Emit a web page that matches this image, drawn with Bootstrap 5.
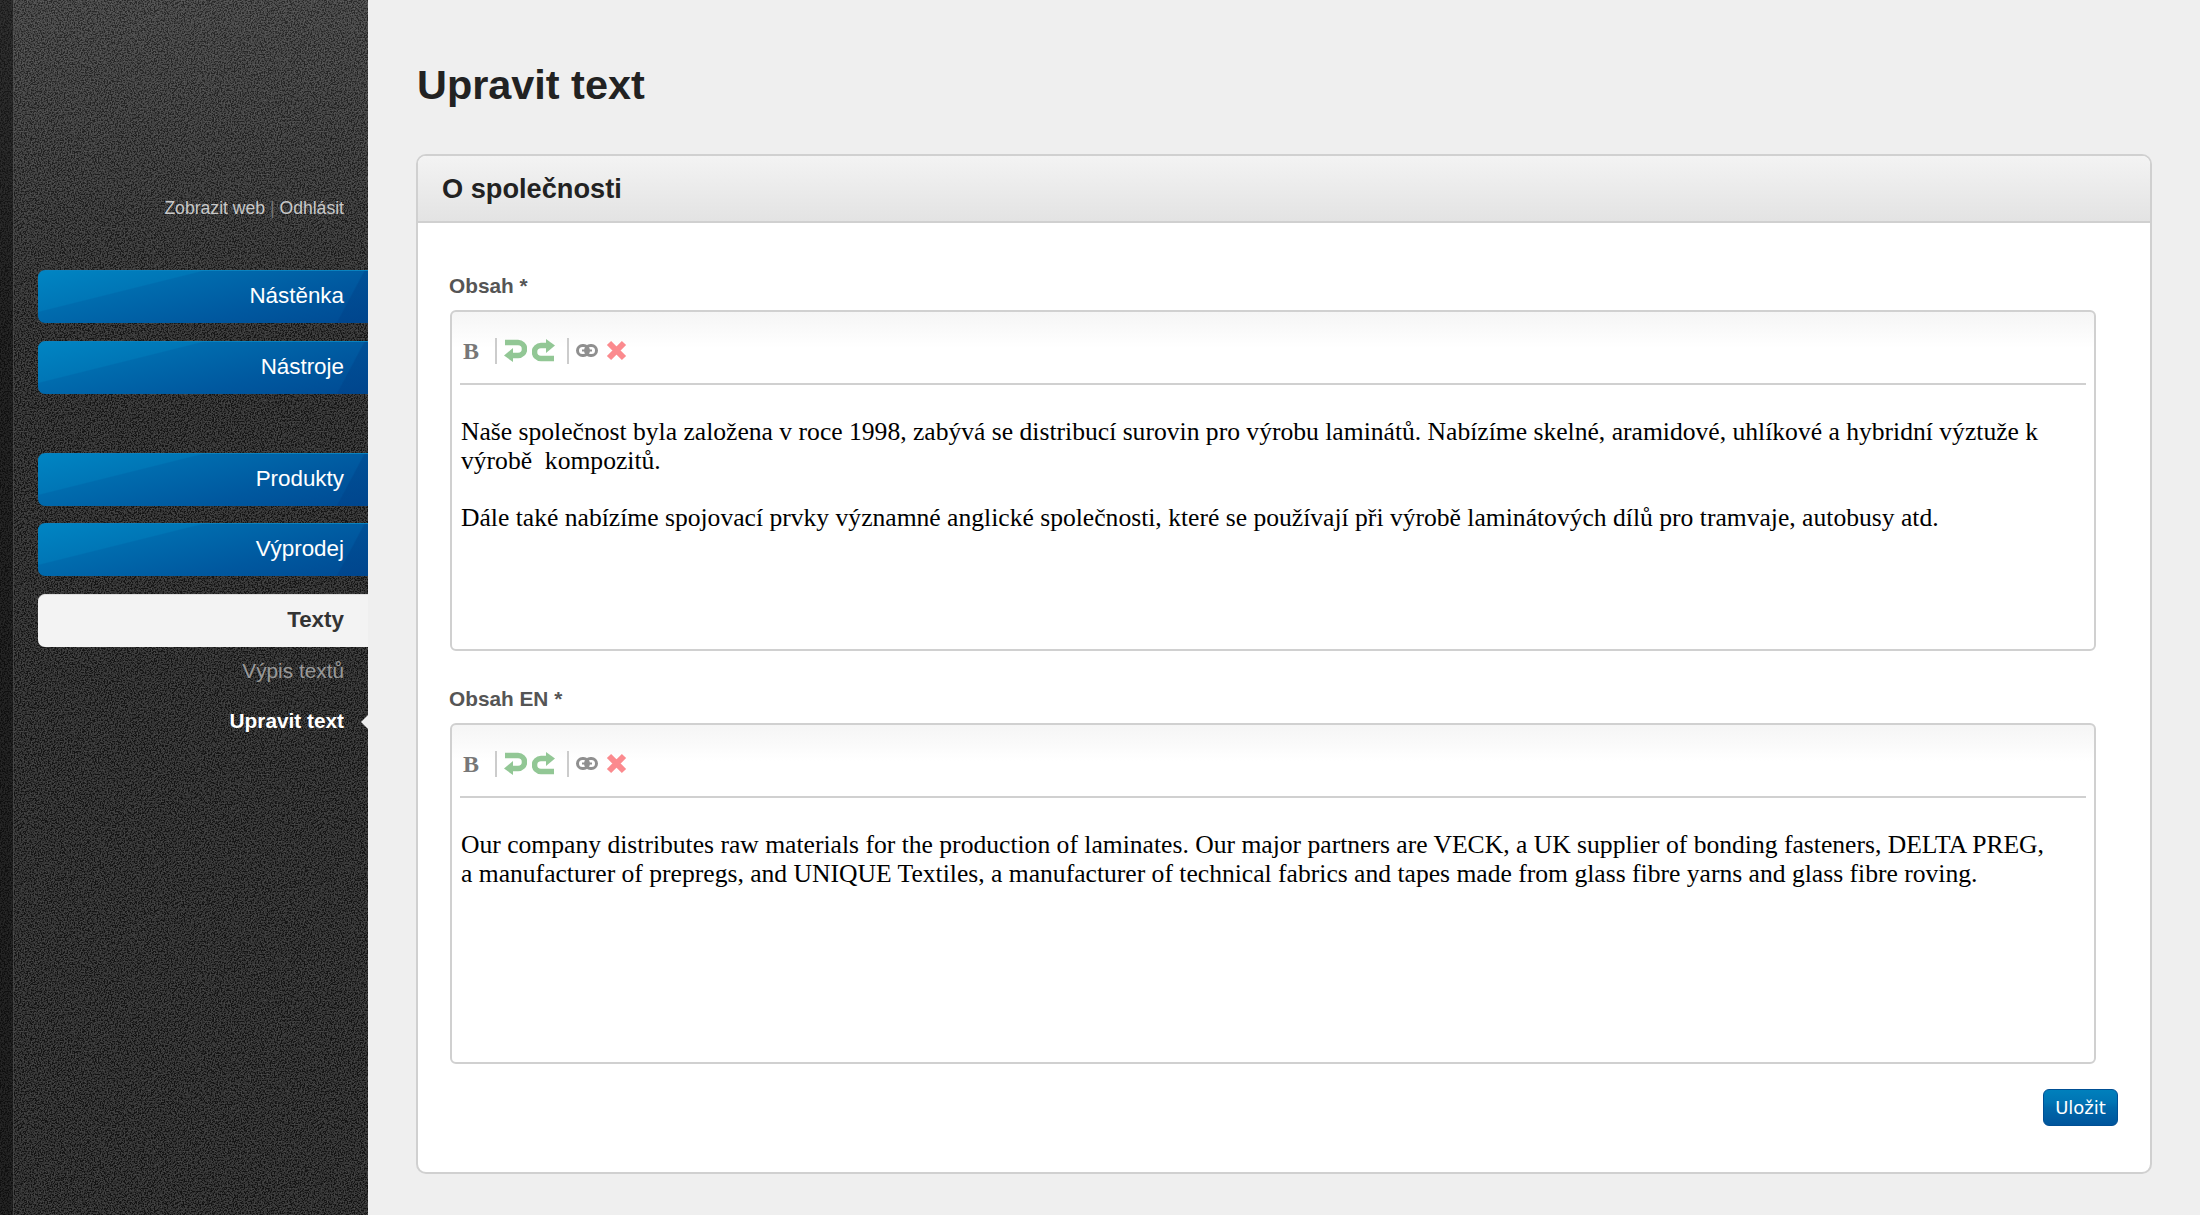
<!DOCTYPE html>
<html lang="cs">
<head>
<meta charset="utf-8">
<title>Upravit text</title>
<link href="https://cdn.jsdelivr.net/npm/bootstrap@5.3.0/dist/css/bootstrap.min.css" rel="stylesheet">
<style>
html,body{height:100%;}
body{background:#efefef;font-family:"Liberation Sans",Arial,sans-serif;color:#222;overflow:hidden;}
.shell{min-height:1215px;}
.side{width:368px;flex:none;position:relative;padding-left:38px;padding-top:198px;
  background-color:#1c1c1c;
  background-image:url("data:image/svg+xml,%3Csvg xmlns='http://www.w3.org/2000/svg' width='300' height='300'%3E%3Cfilter id='n'%3E%3CfeTurbulence type='fractalNoise' baseFrequency='.7' numOctaves='2' stitchTiles='stitch'/%3E%3CfeColorMatrix values='1 0 0 0 -.4 1 0 0 0 -.4 1 0 0 0 -.4 0 0 0 0 .32'/%3E%3C/filter%3E%3Crect width='300' height='300' filter='url(%23n)'/%3E%3C/svg%3E"),linear-gradient(180deg,#3e3e3e 0,#2e2e2e 170px,#1f1f1f 340px,#1c1c1c 100%);}
.side::before{content:"";position:absolute;left:0;top:0;bottom:0;width:14px;background:#0c0c0c;opacity:.5;border-right:1px solid #555;}
.top-links{font-size:17.6px;line-height:20px;text-align:right;padding-right:24px;margin-bottom:52px;}
.top-links a{color:#c9c9c9;text-decoration:none;}
.top-links i{font-style:normal;color:#777;}
.side-nav{gap:17.5px;}
.side-nav .nav-link{height:53px;padding:0 24px 0 0;line-height:50px;text-align:right;font-size:22.4px;color:#fff;border-radius:7px 0 0 7px;border-top:1px solid #0a82bf;
  background:linear-gradient(118deg,rgba(0,60,130,0) 91%,rgba(0,60,130,.35) 91.5%),linear-gradient(166deg,#0085c3 0,#0076b6 30%,#006cae 31%,#00589f 68%,#004a93 100%);}
.side-nav .gap-big{margin-top:41.5px;}
.side-nav .nav-link.on{background:#f3f3f3;color:#333;font-weight:700;border-top-color:#ddd;}
.sub-nav a{display:block;text-align:right;padding-right:24px;font-size:20.8px;line-height:24px;color:#999;text-decoration:none;margin-bottom:26px;position:relative;}
.sub-nav a:first-child{margin-top:12px;}
.sub-nav a.cur{color:#fff;font-weight:700;}
.sub-nav a.cur::after{content:"";position:absolute;right:0;top:6px;border:7px solid transparent;border-right-color:#efefef;border-left-width:0;}
.main{min-width:0;padding:58px 48px 0 48px;}
.page-title{font-size:41.4px;font-weight:700;line-height:54px;margin:0 0 42px 1px;color:#222;}
.panel{border:2px solid #d0d0d0;border-radius:10px;background:#fff;height:1020px;--bs-card-spacer-y:0;}
.panel .card-header{height:67px;padding:0 24px;background:linear-gradient(#f3f3f3,#e3e3e3);border-bottom:2px solid #d0d0d0;border-radius:8px 8px 0 0;font-size:27.2px;font-weight:700;line-height:66px;color:#222;}
.panel .card-body{padding:51px 32px 0 32px;}
.fld-label{display:block;font-size:20.8px;font-weight:700;line-height:24px;color:#555;margin-bottom:12px;margin-left:-1px;}
.editor{border:2px solid #d0d0d0;border-radius:6px;height:341px;margin-bottom:36px;margin-right:22px;padding:0 8px;background:linear-gradient(#f5f5f5 0,#fff 36px);}
.bar{height:73px;border-bottom:2px solid #d0d0d0;padding:6px 0 0 3px;margin:0;}
.bar .bold{font:700 24px/1 "Liberation Serif",serif;color:#777;width:32px;}
.bar .sep{width:2px;height:26px;background:#ccc;margin:0 7px 0 0;}
.bar svg{display:block;flex:none;}
.gap5{margin-right:5px;}
.gap8{margin-right:8px;}
.gap12{margin-right:12px;}
.etext{font:25.6px/28.6px "Liberation Serif","Times New Roman",serif;color:#000;padding:33px 38px 0 1px;}
.etext p{margin:0;}
.save-row{margin-top:-11px;}
.save{font:18px/1 "DejaVu Sans",sans-serif;color:#fff;padding:0;width:75px;height:37px;border-radius:6px;border:1px solid #004f94;background:linear-gradient(#0080bc 0,#0074b4 35%,#0068aa 50%,#00559c 100%);}
.save:hover{color:#fff;}
</style>
</head>
<body>
<div class="shell d-flex">
  <aside class="side">
    <div class="top-links"><a href="#">Zobrazit web</a> <i>|</i> <a href="#">Odhlásit</a></div>
    <nav class="nav flex-column side-nav">
      <a class="nav-link" href="#">Nástěnka</a>
      <a class="nav-link" href="#">Nástroje</a>
      <a class="nav-link gap-big" href="#">Produkty</a>
      <a class="nav-link" href="#">Výprodej</a>
      <a class="nav-link on" href="#">Texty</a>
    </nav>
    <div class="sub-nav">
      <a href="#">Výpis textů</a>
      <a href="#" class="cur">Upravit text</a>
    </div>
  </aside>
  <main class="main flex-grow-1">
    <h1 class="page-title">Upravit text</h1>
    <section class="card panel">
      <div class="card-header">O společnosti</div>
      <div class="card-body">
        <label class="fld-label">Obsah *</label>
        <div class="editor">
          <div class="bar d-flex align-items-center">
            <span class="bold">B</span><span class="sep"></span>
            <svg class="gap5" width="23" height="23" viewBox="0 0 23 23"><path d="M1 3.500h13a6.500 6.500 0 0 1 0 13H8" fill="none" stroke="#92c795" stroke-width="5.500"/><path d="M9 9 0 16.500 9 23z" fill="#92c795"/></svg>
            <svg class="gap12" width="23" height="23" viewBox="0 0 23 23"><path d="M22 19.500H9a6.500 6.500 0 0 1 0-13h6" fill="none" stroke="#92c795" stroke-width="5.500"/><path d="M14 0l9 6.500L14 14z" fill="#92c795"/></svg>
            <span class="sep"></span>
            <svg class="gap8" width="22" height="13" viewBox="0 0 22 13"><rect x="1.500" y="1.500" width="11" height="10" rx="5" fill="none" stroke="#8f8f8f" stroke-width="3"/><rect x="9.500" y="1.500" width="11" height="10" rx="5" fill="none" stroke="#8f8f8f" stroke-width="3"/><path d="M6 6.500h10" stroke="#8f8f8f" stroke-width="2"/></svg>
            <svg width="21" height="21" viewBox="0 0 21 21"><path d="M3 3l15 15M18 3 3 18" stroke="#fb8a8e" stroke-width="6"/></svg>
          </div>
          <div class="etext">
            <p>Naše společnost byla založena v roce 1998, zabývá se distribucí surovin pro výrobu laminátů. Nabízíme skelné, aramidové, uhlíkové a hybridní výztuže k výrobě&nbsp; kompozitů.</p>
            <p>&nbsp;</p>
            <p>Dále také nabízíme spojovací prvky významné anglické společnosti, které se používají při výrobě laminátových dílů pro tramvaje, autobusy atd.</p>
          </div>
        </div>
        <label class="fld-label">Obsah EN *</label>
        <div class="editor">
          <div class="bar d-flex align-items-center">
            <span class="bold">B</span><span class="sep"></span>
            <svg class="gap5" width="23" height="23" viewBox="0 0 23 23"><path d="M1 3.500h13a6.500 6.500 0 0 1 0 13H8" fill="none" stroke="#92c795" stroke-width="5.500"/><path d="M9 9 0 16.500 9 23z" fill="#92c795"/></svg>
            <svg class="gap12" width="23" height="23" viewBox="0 0 23 23"><path d="M22 19.500H9a6.500 6.500 0 0 1 0-13h6" fill="none" stroke="#92c795" stroke-width="5.500"/><path d="M14 0l9 6.500L14 14z" fill="#92c795"/></svg>
            <span class="sep"></span>
            <svg class="gap8" width="22" height="13" viewBox="0 0 22 13"><rect x="1.500" y="1.500" width="11" height="10" rx="5" fill="none" stroke="#8f8f8f" stroke-width="3"/><rect x="9.500" y="1.500" width="11" height="10" rx="5" fill="none" stroke="#8f8f8f" stroke-width="3"/><path d="M6 6.500h10" stroke="#8f8f8f" stroke-width="2"/></svg>
            <svg width="21" height="21" viewBox="0 0 21 21"><path d="M3 3l15 15M18 3 3 18" stroke="#fb8a8e" stroke-width="6"/></svg>
          </div>
          <div class="etext">
            <p>Our company distributes raw materials for the production of laminates. Our major partners are VECK, a UK supplier of bonding fasteners, DELTA PREG, a manufacturer of prepregs, and UNIQUE Textiles, a manufacturer of technical fabrics and tapes made from glass fibre yarns and glass fibre roving.</p>
          </div>
        </div>
        <div class="save-row d-flex justify-content-end">
          <button type="button" class="btn save">Uložit</button>
        </div>
      </div>
    </section>
  </main>
</div>
<script src="https://cdn.jsdelivr.net/npm/bootstrap@5.3.0/dist/js/bootstrap.bundle.min.js"></script>
</body>
</html>
